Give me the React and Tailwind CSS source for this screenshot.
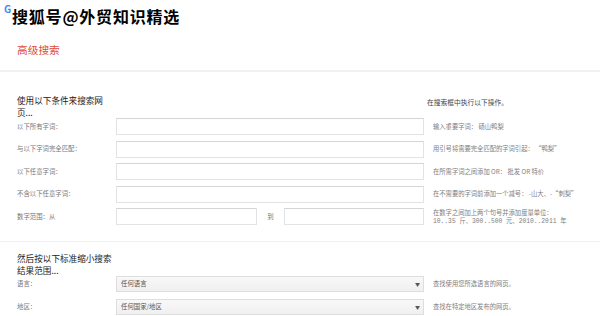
import React from "react";

const F = { fontFamily: '"Noto Sans CJK SC", "Noto Sans", sans-serif' };

function Row({ label, desc, children }) {
  return (
    <div className="flex h-[17px] items-center">
      <div className="w-[99px] shrink-0 text-[6.4px] text-[#777]">{label}</div>
      <div className="flex w-[308px] shrink-0 items-center">{children}</div>
      <div className="ml-[9px] text-[6.3px] text-[#808080] whitespace-nowrap">{desc}</div>
    </div>
  );
}

function Input({ w = "w-full" }) {
  return (
    <div className={`${w} h-[17px] border border-[#e3e3e3] border-t-[#d4d4d4] bg-white`} />
  );
}

function Select({ text }) {
  return (
    <div className="flex h-[16px] w-full items-center justify-between border border-[#dedede] bg-gradient-to-b from-[#f8f8f8] to-[#f0f0f0] pl-[4px] pr-[3px]">
      <span className="text-[6.4px] text-[#555]">{text}</span>
      <span className="text-[5px] text-[#555]">▼</span>
    </div>
  );
}

export default function App() {
  return (
    <div className="relative h-[316px] w-[600px] overflow-hidden bg-white" style={F}>
      {/* watermark */}
      <div className="absolute left-[4px] top-[4px] text-[10px] font-bold leading-none text-[#4285f4]">G</div>
      <div className="absolute left-[12px] top-[5px] text-[16px] font-bold leading-[22px] tracking-[0.8px] text-black [text-shadow:0_0_2px_#fff,0_0_1px_#fff]">
        搜狐号@外贸知识精选
      </div>

      <div className="h-[70px] pl-[17px] pt-[42px]">
        <div className="text-[10.7px] leading-[15px] text-[#dd4b39]">高级搜索</div>
      </div>
      <div className="h-[2px] bg-[#f1f1f1]" />

      <div className="pl-[17px] pt-[22px] pb-[16px]">
        <div className="flex items-start">
          <div className="w-[98px] text-[8.6px] leading-[12px] text-[#222]">使用以下条件来搜索网页...</div>
          <div className="ml-[312px] mt-[2px] text-[6.75px] leading-[12px] text-[#444] whitespace-nowrap">在搜索框中执行以下操作。</div>
        </div>
        <div className="flex flex-col gap-[5.5px]">
          <Row label="以下所有字词：" desc="输入重要字词：  砀山鸭梨"><Input /></Row>
          <Row label="与以下字词完全匹配：" desc="用引号将需要完全匹配的字词引起：  “鸭梨”"><Input /></Row>
          <Row label="以下任意字词：" desc="在所需字词之间添加 OR：  批发 OR 特价"><Input /></Row>
          <Row label="不含以下任意字词：" desc="在不需要的字词前添加一个减号：  -山大、-“刺梨”"><Input /></Row>
          <Row
            label="数字范围：从"
            desc={
              <div className="leading-[9px]">
                <div>在数字之间加上两个句号并添加度量单位：</div>
                <div style={{ fontFamily: '"Liberation Mono", "Noto Sans CJK SC", monospace' }}>10..35 斤、300..500 元、2010..2011 年</div>
              </div>
            }
          >
            <Input w="w-[141px]" />
            <div className="w-[27px] text-center text-[6.4px] text-[#777]">到</div>
            <Input w="w-[140px]" />
          </Row>
        </div>
      </div>
      <div className="h-[1px] bg-[#f0f0f0]" />

      <div className="pl-[17px] pt-[10px]">
        <div className="w-[98px] text-[8.6px] leading-[12px] text-[#222]">然后按以下标准缩小搜索结果范围...</div>
        <div className="flex flex-col gap-[7px]">
          <div className="flex h-[16px] items-center">
            <div className="w-[99px] shrink-0 text-[6.4px] text-[#777]">语言：</div>
            <div className="w-[308px] shrink-0"><Select text="任何语言" /></div>
            <div className="ml-[9px] text-[6.3px] text-[#808080] whitespace-nowrap">查找使用您所选语言的网页。</div>
          </div>
          <div className="flex h-[16px] items-center">
            <div className="w-[99px] shrink-0 text-[6.4px] text-[#777]">地区：</div>
            <div className="w-[308px] shrink-0"><Select text="任何国家/地区" /></div>
            <div className="ml-[9px] text-[6.3px] text-[#808080] whitespace-nowrap">查找在特定地区发布的网页。</div>
          </div>
        </div>
      </div>
    </div>
  );
}
